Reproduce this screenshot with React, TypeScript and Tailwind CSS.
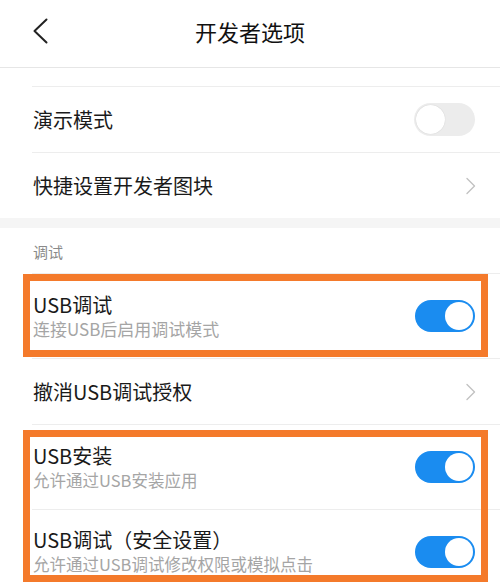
import React from 'react';

const font = { fontFamily: '"Noto Sans CJK SC", "Noto Sans", sans-serif' };

function Toggle({ on }: { on: boolean }) {
  if (on) {
    return (
      <div className="w-[60px] h-[32px] rounded-full bg-[#1a8cf0] flex items-center justify-end p-[2px] shrink-0">
        <div className="w-[28px] h-[28px] rounded-full bg-white" />
      </div>
    );
  }
  return (
    <div className="w-[61px] h-[33px] rounded-full bg-[#ececec] flex items-center justify-start p-[2px] shrink-0">
      <div className="w-[29px] h-[29px] rounded-full bg-white shadow-[0_0_1px_rgba(0,0,0,0.2)]" />
    </div>
  );
}

function Chevron() {
  return (
    <svg width="12" height="18" viewBox="0 0 12 18" className="shrink-0 mr-[-2px]">
      <path d="M2 1.5 L9.5 9 L2 16.5" fill="none" stroke="#c2c2c2" strokeWidth="1.4" strokeLinecap="round" strokeLinejoin="round" />
    </svg>
  );
}

function SimpleRow({ title, right }: { title: string; right: React.ReactNode }) {
  return (
    <div className="ml-[32px] border-t border-[#ededed] h-[66px] flex items-center justify-between pl-[1px] pr-[25px]">
      <span className="text-[20px] text-[#1a1a1a] leading-none">{title}</span>
      {right}
    </div>
  );
}

function DetailRow({ title, sub, on, first, subSize }: { title: string; sub: string; on: boolean; first?: boolean; subSize: string }) {
  return (
    <div className={`ml-[32px] h-[84px] flex items-center justify-between pl-[1px] pr-[25px] ${first ? '' : 'border-t border-[#ededed]'}`}>
      <div className="flex flex-col">
        <span className="text-[20px] text-[#1a1a1a] leading-[22px]">{title}</span>
        <span className={`${subSize} text-[#a5a5a5] leading-[20px] mt-[3px]`}>{sub}</span>
      </div>
      <Toggle on={on} />
    </div>
  );
}

export default function App() {
  return (
    <div className="w-[500px] h-[587px] bg-white overflow-hidden" style={font}>
      <div className="h-[68px] border-b border-[#e6e6e6] grid grid-cols-[1fr_auto_1fr] items-center pb-[5px]">
        <div className="pl-[32px] flex items-center">
          <svg width="18" height="26" viewBox="0 0 18 26">
            <path d="M14.5 1.5 L2.5 13 L14.5 24.5" fill="none" stroke="#222" strokeWidth="2" strokeLinecap="round" strokeLinejoin="round" />
          </svg>
        </div>
        <span className="text-[22px] text-[#111] leading-none">开发者选项</span>
        <div />
      </div>

      <div className="h-[18px]" />
      <SimpleRow title="演示模式" right={<Toggle on={false} />} />
      <SimpleRow title="快捷设置开发者图块" right={<Chevron />} />

      <div className="h-[10px] bg-[#f5f5f5]" />

      <div className="h-[45px] pl-[33px] flex items-center pt-[2px]">
        <span className="text-[15px] text-[#8a8a8a] leading-none">调试</span>
      </div>

      <div className="relative border-t border-[#ededed] ml-[32px]">
        <div className="-ml-[32px]">
          <DetailRow title="USB调试" sub="连接USB后启用调试模式" on first subSize="text-[17px]" />
        </div>
        <div className="absolute top-[0px] h-[83px] left-[-9px] right-[12px] border-[7px] border-[#f47a2b] pointer-events-none" />
      </div>

      <SimpleRow title="撤消USB调试授权" right={<Chevron />} />

      <div className="relative border-t border-[#ededed] ml-[32px]">
        <div className="-ml-[32px]">
          <DetailRow title="USB安装" sub="允许通过USB安装应用" on first subSize="text-[16.5px]" />
          <DetailRow title="USB调试（安全设置）" sub="允许通过USB调试修改权限或模拟点击" on subSize="text-[16.5px]" />
        </div>
        <div className="absolute top-[5px] h-[152px] left-[-9px] right-[12px] border-[7px] border-[#f47a2b] pointer-events-none" />
      </div>
    </div>
  );
}
